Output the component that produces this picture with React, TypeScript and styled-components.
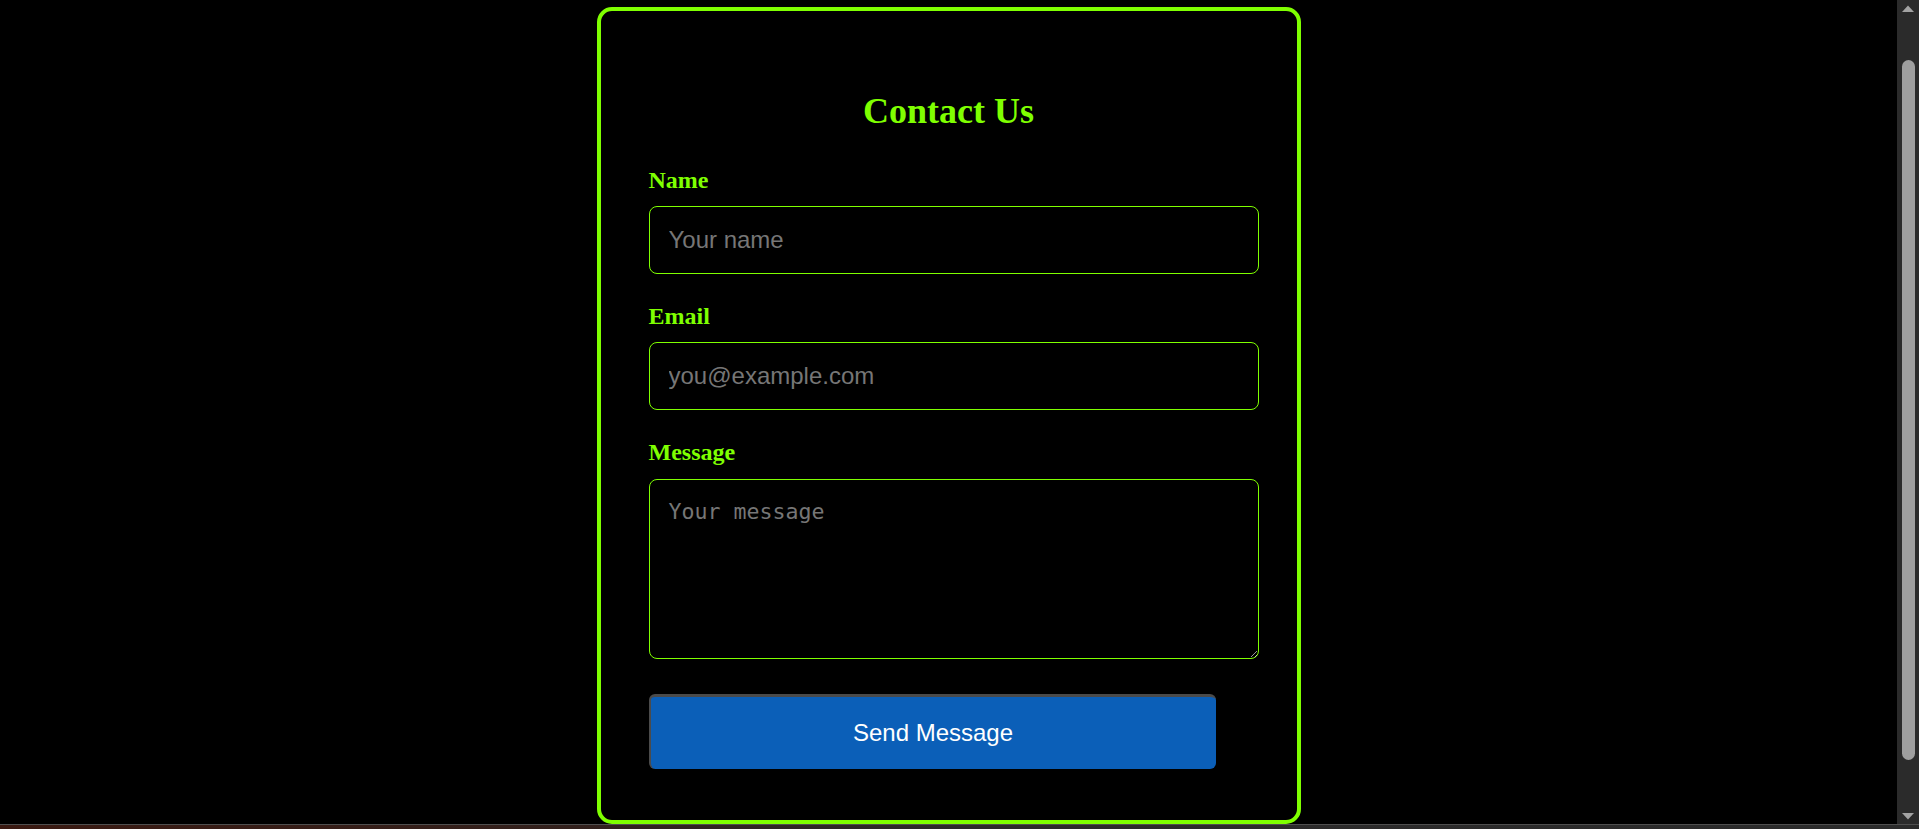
import React from "react";
import styled, { createGlobalStyle } from "styled-components";

const GlobalStyle = createGlobalStyle`
  html {
    color-scheme: dark;
    background: #000;
  }
  body {
    margin: 0;
    background: #000;
    font-family: "Liberation Serif", "Times New Roman", serif;
    overflow: hidden;
  }
  * { box-sizing: border-box; }
`;

const Screen = styled.div`
  display: grid;
  grid-template-rows: 1fr 5px;
  height: 100vh;
  background: #000;
`;

const Viewport = styled.div`
  display: flex;
  min-height: 0;
`;

const Main = styled.main`
  flex: 1;
  display: flex;
  flex-direction: column;
  align-items: center;
  padding-top: 7px;
  overflow: hidden;
`;

const Card = styled.section`
  width: 704px;
  flex-shrink: 0;
  border: 4px solid #7fff00;
  border-radius: 15px;
  padding: 48px 48px 51px 48px;
  background: #000;
`;

const Title = styled.h2`
  margin: 31px 0 35px;
  text-align: center;
  font-family: "Liberation Serif", "Times New Roman", serif;
  font-weight: bold;
  font-size: 36px;
  line-height: normal;
  color: #7fff00;
`;

const Form = styled.form`
  display: flex;
  flex-direction: column;
  width: 600px;
`;

const Field = styled.div<{ $gap?: number }>`
  display: flex;
  flex-direction: column;
  margin-bottom: ${(p) => p.$gap ?? 29}px;
`;

const Label = styled.label`
  display: block;
  margin-bottom: 12px;
  font-family: "Liberation Serif", "Times New Roman", serif;
  font-weight: bold;
  font-size: 24px;
  line-height: normal;
  color: #7fff00;
`;

const TextInput = styled.input`
  width: 610px;
  height: 68px;
  padding: 19px;
  border: 1px solid #7fff00;
  border-radius: 8px;
  background: #000;
  color: #fff;
  font-family: "Liberation Sans", Arial, sans-serif;
  font-size: 24px;
  line-height: 28px;
  outline: none;
  &::placeholder {
    color: #767676;
  }
`;

const TextArea = styled.textarea`
  display: block;
  width: 610px;
  height: 180px;
  margin-top: 1px;
  padding: 19px;
  border: 1px solid #7fff00;
  border-radius: 8px;
  background: #000;
  color: #fff;
  font-family: "DejaVu Sans Mono", "Liberation Mono", monospace;
  font-size: 21.6px;
  outline: none;
  resize: both;
  &::placeholder {
    color: #767676;
  }
`;

const SendButton = styled.button`
  display: flex;
  align-items: center;
  justify-content: center;
  width: 567px;
  height: 75px;
  padding: 0;
  border-style: solid;
  border-width: 3px 0 0 2px;
  border-color: #4b4b4b;
  border-radius: 6px;
  background: #0b5fb8;
  color: #fff;
  font-family: "Liberation Sans", Arial, sans-serif;
  font-size: 24px;
  cursor: pointer;
`;

const ScrollTrack = styled.aside`
  width: 22px;
  display: flex;
  flex-direction: column;
  align-items: center;
  background: #2b2b2b;
`;

const ScrollArrow = styled.div`
  height: 17px;
  width: 100%;
  display: flex;
  align-items: center;
  justify-content: center;
  flex-shrink: 0;
`;

const ScrollRail = styled.div`
  flex: 1;
  width: 100%;
  display: flex;
  justify-content: center;
  padding-top: 43px;
`;

const ScrollThumb = styled.div`
  width: 13px;
  height: 700px;
  border-radius: 7px;
  background: #9f9f9f;
`;

const BottomStrip = styled.div`
  border-top: 1px solid #4f4f4f;
  background: linear-gradient(90deg, #3a1911 0%, #32201c 30%, #2c2a2a 50%, #2b2b2b 100%);
`;

const Triangle = ({ down }: { down?: boolean }) => (
  <svg width="12" height="8" viewBox="0 0 12 8">
    <polygon points={down ? "0,1 12,1 6,7.5" : "0,7 12,7 6,0.5"} fill="#a3a3a3" />
  </svg>
);

export default function App() {
  return (
    <>
      <GlobalStyle />
      <Screen>
        <Viewport>
          <Main>
            <Card>
              <Title>Contact Us</Title>
              <Form onSubmit={(e) => e.preventDefault()}>
                <Field>
                  <Label htmlFor="name">Name</Label>
                  <TextInput id="name" type="text" placeholder="Your name" />
                </Field>
                <Field>
                  <Label htmlFor="email">Email</Label>
                  <TextInput id="email" type="email" placeholder="you@example.com" />
                </Field>
                <Field $gap={35}>
                  <Label htmlFor="message">Message</Label>
                  <TextArea id="message" placeholder="Your message" />
                </Field>
                <SendButton type="submit">Send Message</SendButton>
              </Form>
            </Card>
          </Main>
          <ScrollTrack>
            <ScrollArrow>
              <Triangle />
            </ScrollArrow>
            <ScrollRail>
              <ScrollThumb />
            </ScrollRail>
            <ScrollArrow>
              <Triangle down />
            </ScrollArrow>
          </ScrollTrack>
        </Viewport>
        <BottomStrip />
      </Screen>
    </>
  );
}
